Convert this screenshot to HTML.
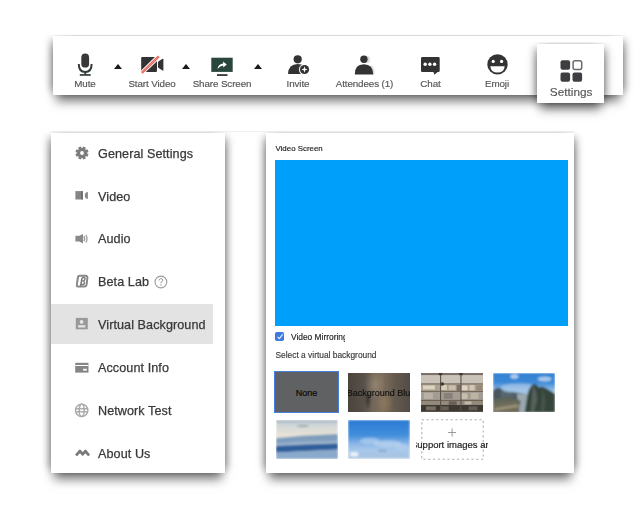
<!DOCTYPE html>
<html><head><meta charset="utf-8">
<style>
*{margin:0;padding:0;box-sizing:border-box}
html,body{width:640px;height:514px;background:#fff;overflow:hidden;position:relative;font-family:"Liberation Sans",sans-serif}
.abs{position:absolute}
#wrap{position:absolute;left:0;top:0;width:640px;height:514px;filter:blur(0.4px)}
#toolbar{position:absolute;left:52.5px;top:36.2px;width:570.5px;height:59px;background:#fff;box-shadow:0 -2px 1.5px -0.5px rgba(0,0,0,0.07),6px 0 8px -4px rgba(0,0,0,0.38),-6px 0 8px -4px rgba(0,0,0,0.38),0 9px 10px -3px rgba(0,0,0,0.55);clip-path:inset(-1.5px -20px -30px -20px)}
.tl{position:absolute;top:78px;font-size:9.8px;letter-spacing:-0.1px;color:#555;-webkit-text-stroke:0.15px #555;white-space:nowrap;text-align:center;width:80px;margin-left:-40px;line-height:12px}
.tri{position:absolute;top:64px;width:0;height:0;border-left:4.3px solid transparent;border-right:4.3px solid transparent;border-bottom:5.8px solid #1a1a1a}
#setbox{position:absolute;left:537px;top:43.5px;width:67px;height:59.5px;background:#fff;box-shadow:0 -2px 1.5px -0.5px rgba(0,0,0,0.07),6px 0 8px -4px rgba(0,0,0,0.38),-6px 0 8px -4px rgba(0,0,0,0.38),0 9px 10px -3px rgba(0,0,0,0.55);clip-path:inset(-1.5px -20px -30px -20px)}
#side{position:absolute;left:51px;top:133px;width:174px;height:340px;background:#fff;box-shadow:0 -2px 1.5px -0.5px rgba(0,0,0,0.07),6px 0 8px -4px rgba(0,0,0,0.38),-6px 0 8px -4px rgba(0,0,0,0.38),0 9px 10px -3px rgba(0,0,0,0.55);clip-path:inset(-1.5px -20px -30px -20px)}
.row{position:absolute;left:0;width:161px;height:41px}
.row .t{position:absolute;left:46px;font-size:12.6px;color:#333;white-space:nowrap;line-height:14px}
.row svg{position:absolute;left:23px}
#side .t{letter-spacing:0.08px;color:#383838 !important;-webkit-text-stroke:0.25px #383838}
#main{position:absolute;left:265.5px;top:133px;width:308px;height:340px;background:#fff;box-shadow:0 -2px 1.5px -0.5px rgba(0,0,0,0.07),6px 0 8px -4px rgba(0,0,0,0.38),-6px 0 8px -4px rgba(0,0,0,0.38),0 9px 10px -3px rgba(0,0,0,0.55);clip-path:inset(-1.5px -20px -30px -20px)}
.st{position:absolute;font-size:8.2px;color:#222;white-space:nowrap;line-height:10px;-webkit-text-stroke:0.15px currentColor}
.th{position:absolute;width:63px;height:40px;overflow:hidden}
</style></head><body>
<div id="wrap">

<div id="toolbar"></div>
<div id="setbox"></div>

<!-- toolbar icons -->
<svg class="abs" style="left:76px;top:52px" width="18" height="25" viewBox="0 0 18 25">
  <rect x="5.3" y="1.6" width="7.8" height="14" rx="3.9" fill="#383838"/>
  <path d="M2.8 11.9 Q2.8 19.9 9.2 19.9 Q15.6 19.9 15.6 11.9" fill="none" stroke="#333c3a" stroke-width="2"/>
  <rect x="8.3" y="19.5" width="1.9" height="3" fill="#333c3a"/>
  <rect x="3.8" y="22.1" width="10.9" height="1.7" fill="#333c3a"/>
</svg>
<div class="tl" style="left:85px">Mute</div>
<div class="tri" style="left:114.3px"></div>

<svg class="abs" style="left:140px;top:55px" width="26" height="19" viewBox="0 0 26 19">
  <rect x="1.2" y="2" width="15.8" height="14.9" rx="0.8" fill="#333"/>
  <path d="M18 7.5 Q18 6.5 19 6 L22.6 3.8 Q23.4 3.4 23.4 4.5 V15 Q23.4 16.1 22.6 15.6 L19 13.3 Q18 12.8 18 11.8 Z" fill="#333"/>
  <line x1="1.8" y1="17.8" x2="18.8" y2="1.3" stroke="#fff" stroke-width="4.4"/>
  <line x1="1.8" y1="17.8" x2="18.8" y2="1.3" stroke="#e86058" stroke-width="2.5"/>
  <line x1="1.8" y1="17.8" x2="18.8" y2="1.3" stroke="#f4b0a8" stroke-width="0.6"/>
</svg>
<div class="tl" style="left:152px">Start Video</div>
<div class="tri" style="left:181.7px"></div>

<svg class="abs" style="left:210px;top:56px" width="24" height="22" viewBox="0 0 24 22">
  <rect x="1.3" y="1.7" width="21.4" height="14.2" fill="#2a463c"/>
  <rect x="7" y="18.2" width="10.5" height="1.7" fill="#2a2a2a"/>
  <path d="M7.5 13 Q8.5 7.8 13.2 7.6 L13 5.5 L16.8 8.4 L13.2 11.4 L13.3 9.6 Q10 9.8 7.5 13Z" fill="#fff"/>
</svg>
<div class="tl" style="left:222px">Share Screen</div>
<div class="tri" style="left:254.2px"></div>

<svg class="abs" style="left:286px;top:54px" width="25" height="22" viewBox="0 0 25 22">
  <circle cx="11.7" cy="5.3" r="4.1" fill="#333"/>
  <path d="M2 19.9 Q2.4 10.2 11.7 10 Q16 10 17.5 11.5 L17.5 19.9 Z" fill="#333"/>
  <circle cx="18.5" cy="15.5" r="5.6" fill="#fff"/>
  <circle cx="18.5" cy="15.5" r="4.6" fill="#333"/>
  <path d="M18.5 12.3 L19.3 14.7 L21.7 15.5 L19.3 16.3 L18.5 18.7 L17.7 16.3 L15.3 15.5 L17.7 14.7Z" fill="#fff"/>
</svg>
<div class="tl" style="left:298px">Invite</div>

<svg class="abs" style="left:352px;top:54px" width="25" height="22" viewBox="0 0 25 22">
  <circle cx="14.5" cy="5.4" r="3.6" fill="#ddd"/>
  <path d="M19 11 Q22.5 13 22.8 20.5 H20Z" fill="#ddd"/>
  <circle cx="11.9" cy="5.2" r="3.7" fill="#333"/>
  <path d="M2.8 20.5 Q2.6 10.3 11.9 10.2 Q21.2 10.3 21.2 20.5 Z" fill="#333"/>
</svg>
<div class="tl" style="left:364.5px">Attendees (1)</div>

<svg class="abs" style="left:419px;top:55px" width="23" height="22" viewBox="0 0 23 22">
  <path d="M3.2 2 H19.5 Q20.7 2 20.7 3.2 V15.7 Q20.7 16.9 19.5 16.9 H18.6 L15.4 19.7 L14.4 16.9 H3.2 Q2 16.9 2 15.7 V3.2 Q2 2 3.2 2Z" fill="#333"/>
  <circle cx="6.2" cy="9.3" r="1.7" fill="#fff"/>
  <circle cx="10.9" cy="9.3" r="1.7" fill="#fff"/>
  <circle cx="15.6" cy="9.3" r="1.7" fill="#fff"/>
</svg>
<div class="tl" style="left:430.5px">Chat</div>

<svg class="abs" style="left:485px;top:53px" width="25" height="24" viewBox="0 0 25 24">
  <circle cx="12.5" cy="11.4" r="10.2" fill="#333"/>
  <circle cx="8.2" cy="8.4" r="1.6" fill="#fff"/>
  <circle cx="16.6" cy="8.4" r="1.6" fill="#fff"/>
  <path d="M5.3 13.2 H19.7 Q19.2 19.6 12.5 19.6 Q5.8 19.6 5.3 13.2Z" fill="#fff"/>
</svg>
<div class="tl" style="left:497px">Emoji</div>

<svg class="abs" style="left:559px;top:59px" width="25" height="24" viewBox="0 0 25 24">
  <rect x="1.5" y="1.2" width="9.6" height="9.6" rx="2" fill="#3e3e42"/>
  <rect x="14.1" y="1.8" width="8.6" height="8.6" rx="2" fill="#fff" stroke="#6a6a6a" stroke-width="1.5"/>
  <rect x="1.5" y="13.5" width="9.6" height="9.2" rx="2" fill="#3e3e42"/>
  <rect x="13.5" y="13.5" width="9.6" height="9.2" rx="2" fill="#3e3e42"/>
</svg>
<div class="tl" style="left:571.2px;top:85.2px;font-size:11.8px;letter-spacing:0;line-height:14px">Settings</div>

<div class="abs" style="left:51px;top:130.6px;width:523px;height:1.3px;background:rgba(0,0,0,0.06)"></div>
<!-- sidebar -->
<div id="side">
  <div class="row" style="top:171.1px;left:0;width:161.5px;background:#e3e3e3;height:40.3px"></div>
  <!-- General Settings -->
  <svg style="position:absolute;left:22.5px;top:12.8px" width="16" height="16" viewBox="0 0 16 16">
    <g fill="#7c7c7c"><circle cx="8" cy="7" r="4.9"/>
    <rect x="6.5" y="0.5" width="3" height="13" transform="rotate(22.5 8 7)"/>
    <rect x="6.5" y="0.5" width="3" height="13" transform="rotate(67.5 8 7)"/>
    <rect x="6.5" y="0.5" width="3" height="13" transform="rotate(112.5 8 7)"/>
    <rect x="6.5" y="0.5" width="3" height="13" transform="rotate(157.5 8 7)"/></g>
    <circle cx="8" cy="7" r="1.9" fill="#fff"/>
  </svg>
  <div class="t" style="position:absolute;left:47px;top:14px;font-size:12.6px;color:#333;white-space:nowrap;line-height:14px">General Settings</div>
  <!-- Video -->
  <svg style="position:absolute;left:24px;top:57px" width="14" height="11" viewBox="0 0 14 11">
    <rect x="0.4" y="1.1" width="7.4" height="8.4" fill="#858585"/>
    <rect x="6.2" y="1.1" width="1.6" height="8.4" fill="#6a6a6a"/>
    <path d="M12.9 1.8 Q9.8 2.4 9.8 5.4 Q9.8 8.5 12.9 9 Z" fill="#888"/>
  </svg>
  <div class="t" style="position:absolute;left:47px;top:56.7px;font-size:12.6px;color:#333;white-space:nowrap;line-height:14px">Video</div>
  <!-- Audio -->
  <svg style="position:absolute;left:24px;top:100px" width="14" height="12" viewBox="0 0 14 12">
    <path d="M0.4 2.8 H4.3 L8 0.9 V10.5 L4.3 8.6 H0.4Z" fill="#8a8a8a"/>
    <path d="M9 3.2 Q10.3 5.7 9 8.2" fill="none" stroke="#9a9a9a" stroke-width="1.5"/>
    <path d="M10.9 1.8 Q13.2 5.7 10.9 9.6" fill="none" stroke="#aaa" stroke-width="1.4"/>
  </svg>
  <div class="t" style="position:absolute;left:47px;top:99.4px;font-size:12.6px;color:#333;white-space:nowrap;line-height:14px">Audio</div>
  <!-- Beta -->
  <svg style="position:absolute;left:24px;top:141px" width="14" height="14" viewBox="0 0 14 14">
    <path d="M4.6 1.8 H10.6 Q12.6 1.8 12.4 3.8 L11.6 10.4 Q11.3 12.4 9.3 12.4 H2.8 Q1.6 12.4 1.8 11.2 L2.8 3.8 Q3 1.8 4.6 1.8Z" fill="none" stroke="#888" stroke-width="2"/>
    <path d="M5.5 12.3 L6.9 4.6 Q7.3 3.3 8.7 3.4 Q10.2 3.6 9.9 5.2 Q9.6 6.5 8.3 6.9 Q9.8 7.4 9.4 9.1 Q9 10.7 7.3 10.5 Q6.6 10.4 6.2 9.8" fill="none" stroke="#7a7a7a" stroke-width="1.5"/>
  </svg>
  <div class="t" style="position:absolute;left:47px;top:141.7px;font-size:12.6px;color:#333;white-space:nowrap;line-height:14px">Beta Lab</div>
  <svg style="position:absolute;left:102.5px;top:141.7px" width="14" height="14" viewBox="0 0 14 14">
    <circle cx="6.9" cy="7" r="5.9" fill="none" stroke="#9a9a9a" stroke-width="1.1"/>
    <path d="M5 5.5 Q5 3.6 6.9 3.6 Q8.8 3.6 8.8 5.2 Q8.8 6.4 7 7.1 V8.4" fill="none" stroke="#9a9a9a" stroke-width="1"/>
    <circle cx="7" cy="10" r="0.7" fill="#9a9a9a"/>
  </svg>
  <!-- Virtual Background -->
  <svg style="position:absolute;left:24px;top:184px" width="14" height="14" viewBox="0 0 14 14">
    <rect x="0.8" y="0.9" width="12" height="11.4" fill="#999"/>
    <circle cx="6.6" cy="4.9" r="1.9" fill="#e6e6e6"/>
    <rect x="3.1" y="8.2" width="7.2" height="2.3" fill="#e6e6e6"/>
  </svg>
  <div class="t" style="position:absolute;left:47px;top:185.2px;font-size:12.6px;color:#333;white-space:nowrap;line-height:14px">Virtual Background</div>
  <!-- Account -->
  <svg style="position:absolute;left:23.5px;top:228.7px" width="15" height="12" viewBox="0 0 15 12">
    <rect x="0.2" y="0.8" width="13.3" height="9.8" fill="#858585"/>
    <rect x="0.2" y="3" width="13.3" height="1" fill="#fff"/>
    <rect x="8.1" y="6.8" width="3.6" height="1.8" fill="#fff"/>
  </svg>
  <div class="t" style="position:absolute;left:47px;top:228px;font-size:12.6px;color:#333;white-space:nowrap;line-height:14px">Account Info</div>
  <!-- Network -->
  <svg style="position:absolute;left:23px;top:270.3px" width="16" height="15" viewBox="0 0 16 15">
    <g fill="none" stroke="#a8a8a8" stroke-width="1.4">
    <circle cx="7.7" cy="7.3" r="6.2"/>
    <ellipse cx="7.7" cy="7.3" rx="2.5" ry="6.2"/>
    <line x1="1.5" y1="5.8" x2="13.9" y2="5.8"/>
    <line x1="1.5" y1="8.8" x2="13.9" y2="8.8"/>
    </g>
  </svg>
  <div class="t" style="position:absolute;left:47px;top:270.7px;font-size:12.6px;color:#333;white-space:nowrap;line-height:14px">Network Test</div>
  <!-- About -->
  <svg style="position:absolute;left:24px;top:314.8px" width="16" height="9" viewBox="0 0 16 9">
    <path d="M1.8 6.6 L5 3 L7.7 6.3 L10.3 3 L13.4 6.6" fill="none" stroke="#7a7a7a" stroke-width="2.7" stroke-linejoin="round" stroke-linecap="round"/>
  </svg>
  <div class="t" style="position:absolute;left:47px;top:314px;font-size:12.6px;color:#333;white-space:nowrap;line-height:14px">About Us</div>
</div>

<!-- main panel -->
<div id="main">
  <div class="st" style="left:10px;top:11px;font-size:7.9px;color:#1a1a1a">Video Screen</div>
  <div class="abs" style="left:9.5px;top:27px;width:293px;height:165.7px;background:#00a0fa"></div>
  <div class="abs" style="left:9.5px;top:199.3px;width:9.3px;height:8.9px;background:#3f7ae3;border-radius:1.8px"></div>
  <svg class="abs" style="left:10.3px;top:200.3px" width="8" height="7" viewBox="0 0 8 7"><path d="M1.6 3.9 L3.4 5.6 L6.6 1.4" fill="none" stroke="#e8f0ff" stroke-width="1.1"/></svg>
  <div class="st" style="left:25.5px;top:199px;width:53.5px;overflow:hidden;font-size:8.4px">Video Mirroring</div>
  <div class="st" style="left:10px;top:217px;font-size:8.4px;color:#3a3a3a">Select a virtual background</div>
  <!-- thumbs row1 -->
  <div class="th" style="left:8.6px;top:238.4px;width:65px;height:41.6px;background:#606163;border:1.8px solid #467ede"></div>
  <div class="st" style="left:8.6px;top:254.5px;width:65px;text-align:center;color:#0a0a0a;font-size:9px;-webkit-text-stroke:0.2px #0a0a0a">None</div>
  <div class="th" style="left:82.8px;top:239.7px;width:62px;height:39px;background:radial-gradient(ellipse 10px 14px at 44% 30%,rgba(170,150,125,0.55),rgba(170,150,125,0) 100%),radial-gradient(ellipse 8px 12px at 60% 75%,rgba(160,130,95,0.5),rgba(160,130,95,0) 100%),radial-gradient(ellipse 4px 10px at 32% 70%,rgba(40,35,30,0.6),rgba(40,35,30,0) 100%),linear-gradient(90deg,#4a443d 0%,#57504a 25%,#75695b 42%,#7d6f5e 55%,#655a4e 75%,#534c46 100%)"></div>
  <div class="st" style="left:82.8px;top:254.5px;width:62px;overflow:hidden;text-align:left;color:#111;font-size:9px"><span style="position:relative;left:-1.5px">Background Blur</span></div>
  <svg class="abs" style="left:155.3px;top:240px" width="62.4" height="38.8" viewBox="0 0 63 39" preserveAspectRatio="none">
    <defs><filter id="bl1" x="-5%" y="-5%" width="110%" height="110%"><feGaussianBlur stdDeviation="0.8"/></filter></defs>
    <g filter="url(#bl1)">
    <rect x="0" y="0" width="63" height="39" fill="#b5ac9f"/>
    <rect x="0" y="0" width="63" height="2.2" fill="#7a7269"/>
    <rect x="0" y="2.2" width="63" height="8.3" fill="#c9c2b8"/>
    <rect x="0" y="10.5" width="63" height="1.2" fill="#6e6052"/>
    <rect x="0" y="11.7" width="63" height="6.3" fill="#ada190"/>
    <rect x="2" y="12.5" width="12" height="4" fill="#ddd3c1"/>
    <rect x="20" y="12" width="6" height="5" fill="#d9cfbd"/>
    <rect x="28" y="12.5" width="7" height="4.5" fill="#cbc0ad"/>
    <rect x="41" y="12.5" width="6" height="5" fill="#ded6c5"/>
    <rect x="49" y="12" width="5" height="5.5" fill="#d3c8b3"/>
    <rect x="36" y="12" width="4" height="6" fill="#7c706a"/>
    <rect x="56" y="12.5" width="6" height="5" fill="#94897c"/>
    <rect x="0" y="18" width="63" height="1" fill="#6a5d50"/>
    <rect x="0" y="19" width="63" height="8" fill="#a39c92"/>
    <rect x="3" y="20" width="9" height="6" fill="#b8b1a6"/>
    <rect x="23" y="20" width="9" height="6" fill="#8a807a"/>
    <rect x="40" y="20.5" width="7" height="5.5" fill="#c7beaf"/>
    <rect x="50" y="20" width="8" height="6" fill="#bcb3a3"/>
    <rect x="0" y="27" width="63" height="1.1" fill="#6a5c4f"/>
    <rect x="0" y="28.1" width="63" height="4" fill="#948a7c"/>
    <rect x="28" y="28.5" width="8" height="3.5" fill="#676058"/>
    <rect x="44" y="28.5" width="7" height="3.2" fill="#c0b6a5"/>
    <rect x="0" y="32.1" width="63" height="6.9" fill="#3d3832"/>
    <rect x="5" y="33.5" width="10" height="4" fill="#766d63"/>
    <rect x="20" y="33.5" width="8" height="4" fill="#675f56"/>
    <rect x="48" y="33.5" width="9" height="4" fill="#625b53"/>
    <rect x="19.2" y="0" width="1.1" height="39" fill="#5a524a"/>
    <rect x="39.8" y="0" width="1.1" height="39" fill="#5a524a"/>
    <circle cx="21.5" cy="11" r="1.8" fill="#3a3430"/><rect x="18" y="0" width="3.5" height="2.2" fill="#3e3832"/><rect x="38.6" y="0" width="3.5" height="2.2" fill="#3e3832"/>
    </g>
  </svg>
  <svg class="abs" style="left:227.8px;top:239.7px" width="62.1" height="39.4" viewBox="0 0 62.5 39.5" preserveAspectRatio="none">
    <defs><linearGradient id="sky1" x1="0" y1="0" x2="0" y2="1">
      <stop offset="0" stop-color="#2f7fd3"/><stop offset="0.25" stop-color="#3d8ad8"/><stop offset="0.45" stop-color="#9cc2e6"/><stop offset="0.6" stop-color="#c9dcea"/></linearGradient>
      <filter id="bl2" x="-5%" y="-5%" width="110%" height="110%"><feGaussianBlur stdDeviation="1.1"/></filter></defs>
    <g filter="url(#bl2)">
    <rect width="62.5" height="39.5" fill="url(#sky1)"/>
    <ellipse cx="21.5" cy="3.5" rx="4" ry="2.2" fill="#cfe0f2" opacity="0.8"/>
    <ellipse cx="26" cy="14" rx="18" ry="3.5" fill="#b3cfe9" opacity="0.6"/><ellipse cx="52" cy="6" rx="7" ry="2.5" fill="#d6e6f5" opacity="0.7"/>
    <path d="M0 17.5 Q2.5 15 5.5 14.5 Q8.5 15.5 11 18.5 Q15 19 19 19 L26 20 L34 21 V39.5 H0Z" fill="#46565f"/>
    <path d="M8 18.5 Q14 18.5 20 19.5 L22 24 L8 25Z" fill="#56666e"/>
    <path d="M24 21 L34 21 L35 39.5 L26 39.5 Z" fill="#9aa8b0"/>
    <path d="M0 26 Q10 24.5 22 25 L28 28 L25 39.5 H0Z" fill="#5e6558"/>
    <path d="M0 30 L24 28.5 L27 39.5 H0Z" fill="#6f6c5a"/>
    <path d="M1 35.5 L25 31.5 L26 33.5 L3 37.5Z" fill="#a39a80"/>
    <path d="M32 39.5 L35 20 Q38 11.5 41.5 11 Q44.5 11.5 46 14.5 Q50 12.5 53.5 15.5 Q58 17.5 62.5 21 V39.5Z" fill="#34443a"/>
    <path d="M40 12.5 Q44 16 44.5 27 L41 39.5 L37.5 39.5 Q39 28 40 12.5Z" fill="#56625c"/>
    <path d="M50 15 Q52 20 53 30 L51 39.5 L48 39.5Z" fill="#46544a"/>
    </g>
  </svg>
  <!-- row2 -->
  <svg class="abs" style="left:10.3px;top:286.8px" width="61.8" height="38.9" viewBox="0 0 62 39" preserveAspectRatio="none">
    <defs><filter id="bl3" x="-5%" y="-5%" width="110%" height="110%"><feGaussianBlur stdDeviation="0.9"/></filter>
    <linearGradient id="sea1" x1="0" y1="0" x2="0" y2="1"><stop offset="0" stop-color="#a4b5c2"/><stop offset="0.12" stop-color="#cfd6d8"/><stop offset="0.4" stop-color="#e9e4d6"/></linearGradient></defs>
    <g filter="url(#bl3)">
    <rect width="62" height="39" fill="url(#sea1)"/>
    <path d="M0 18 Q30 15 62 14 V39 H0Z" fill="#7f9ebe"/>
    <path d="M0 23.5 Q30 21.5 62 21 V39 H0Z" fill="#9fb6cf"/>
    <path d="M0 33 L62 33 L62 39 L0 39Z" fill="#88a9c9"/>
    <path d="M0 26 Q30 24.5 62 23.5 V29.5 Q30 31 0 32.5Z" fill="#2d5f9b"/>
    <path d="M0 32.5 Q30 31 62 29.5 V39 H0Z" fill="#8aaacb"/>
    <ellipse cx="27" cy="6" rx="6" ry="1" fill="#9aa6ae"/>
    </g>
  </svg>
  <svg class="abs" style="left:82.9px;top:287px" width="61.8" height="38.7" viewBox="0 0 62.5 39" preserveAspectRatio="none">
    <defs><filter id="bl4" x="-5%" y="-5%" width="110%" height="110%"><feGaussianBlur stdDeviation="1.1"/></filter>
    <linearGradient id="sky2" x1="0" y1="0" x2="0" y2="1"><stop offset="0" stop-color="#2a7ad4"/><stop offset="0.4" stop-color="#438fdc"/><stop offset="0.62" stop-color="#8db7e6"/><stop offset="0.78" stop-color="#a9c8ea"/><stop offset="1" stop-color="#a6c2e0"/></linearGradient></defs>
    <g filter="url(#bl4)">
    <rect width="62.5" height="39" fill="url(#sky2)"/>
    <ellipse cx="22" cy="21" rx="10" ry="3" fill="#c5dbf2" opacity="0.55"/>
    <ellipse cx="40" cy="24" rx="14" ry="3.5" fill="#c8dcf2" opacity="0.55"/>
    <ellipse cx="54" cy="27" rx="7" ry="3" fill="#c0d6ef" opacity="0.5"/>
    <rect x="31" y="30.5" width="8" height="1.2" fill="#7390ad"/>
    <rect x="2.2" y="32.5" width="8" height="4" fill="#eef4fb"/>
    </g>
  </svg>
  <svg class="abs" style="left:155px;top:285.8px" width="63" height="41" viewBox="0 0 63 41">
    <rect x="0.8" y="0.8" width="61.4" height="39.4" fill="none" stroke="#b0b0b0" stroke-width="1.1" stroke-dasharray="2.2 2.6"/>
    <rect x="30.6" y="9.5" width="1" height="8" fill="#999"/>
    <rect x="27.1" y="13" width="8" height="1" fill="#999"/>
  </svg>
  <div class="abs" style="left:150px;top:305px;width:72px;height:13px;overflow:hidden">
    <span style="position:absolute;left:38px;top:0;transform:translateX(-50%);font-size:9.5px;line-height:13px;white-space:nowrap;color:#1e1e1e;-webkit-text-stroke:0.2px #1e1e1e">Support images and</span>
  </div>
</div>

</div>
</body></html>
